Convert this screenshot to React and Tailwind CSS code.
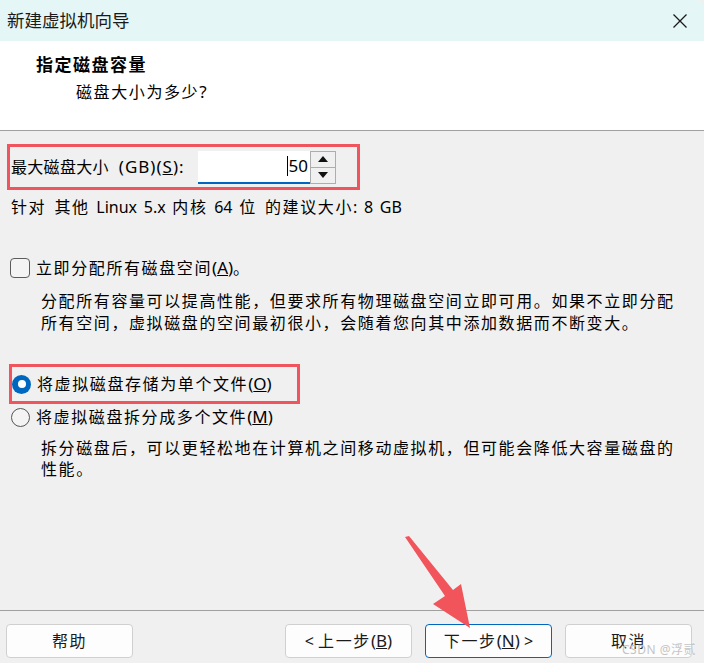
import React from "react";

const FONT = { fontFamily: '"Noto Sans", "Noto Sans CJK SC", sans-serif' };

function Cj({ children }) {
  return <span className="tracking-[1.6px]">{children}</span>;
}

function Radio({ checked }) {
  if (checked) {
    return (
      <span className="w-[19px] h-[19px] rounded-full bg-[#0067c0] flex items-center justify-center shrink-0">
        <span className="w-[8px] h-[8px] rounded-full bg-white" />
      </span>
    );
  }
  return <span className="w-[19px] h-[19px] rounded-full border border-[#555] bg-[#f4f4f4] shrink-0" />;
}

function Btn({ children, primary, w }) {
  return (
    <div
      className={
        "h-[34px] rounded-[4px] flex items-center justify-center text-[16px] text-[#1b1b1b] bg-[#fdfdfd] " +
        (primary ? "border border-[#0067c0] " : "border border-[#d0d0d0] ") +
        w
      }
    >
      <span className="whitespace-pre">{children}</span>
    </div>
  );
}

export default function App() {
  return (
    <div className="w-[704px] h-[663px] bg-[#f0f0f0] relative overflow-hidden flex flex-col text-black" style={FONT}>
      {/* title bar */}
      <div className="h-[41px] bg-[#e4f7f6] flex items-center justify-between shrink-0 rounded-tr-[8px]">
        <span className="ml-[7px] text-[17.5px] text-[#1a1a1a]">新建虚拟机向导</span>
        <svg width="16" height="16" viewBox="0 0 16 16" className="mr-[16px]">
          <path d="M1.5 1.5 L14.5 14.5 M14.5 1.5 L1.5 14.5" stroke="#1a1a1a" strokeWidth="1.3" fill="none" />
        </svg>
      </div>

      {/* header */}
      <div className="h-[90px] bg-white border-b border-[#a0a0a0] shrink-0 pt-[12px]">
        <div className="ml-[36px] text-[17px] font-bold leading-[24px] tracking-[1.5px]">指定磁盘容量</div>
        <div className="mt-[3px] ml-[76px] text-[16px] leading-[24px]">
          <Cj>磁盘大小为多少</Cj><span className="text-[17px]">?</span>
        </div>
      </div>

      {/* body */}
      <div className="flex-1 flex flex-col">
        <div className="mt-[13px] ml-[7px] w-[353px] h-[46px] border-[3px] border-[#f0545c] flex items-center">
          <div className="w-[188px] pl-[1px] text-[16px] whitespace-nowrap">
            <span className="tracking-[0.3px]">最大磁盘大小</span>
            <span className="text-[17px] ml-[10px] tracking-[1px]">(GB)(<span className="underline">S</span>):</span>
          </div>
          <div className="w-[112px] h-[33px] bg-white border-b-2 border-[#0067c0] flex items-center justify-end pr-[2px] text-[17px]">
            <span className="w-px h-[20px] bg-black mr-[1px]" />
            50
          </div>
          <div className="w-[26px] h-[33px] border border-[#adadad] flex flex-col bg-[#f0f0f0]">
            <div className="flex-1 border-b border-[#adadad] flex items-center justify-center">
              <svg width="10" height="6" viewBox="0 0 10 6"><path d="M5 0 L10 6 L0 6 Z" fill="#111" /></svg>
            </div>
            <div className="flex-1 flex items-center justify-center">
              <svg width="10" height="6" viewBox="0 0 10 6"><path d="M0 0 L10 0 L5 6 Z" fill="#111" /></svg>
            </div>
          </div>
        </div>

        <div className="mt-[6px] ml-[11px] h-[22px] leading-[22px] text-[16px] whitespace-nowrap [word-spacing:2.5px]">
          <Cj>针对 其他</Cj> Linux 5.x <Cj>内核</Cj> 64 <Cj>位 的建议大小</Cj>: 8 GB
        </div>

        <div className="mt-[39px] ml-[10px] h-[22px] flex items-center">
          <span className="w-[20px] h-[20px] rounded-[4px] border border-[#5c5c5c] bg-[#f4f4f4] shrink-0" />
          <span className="ml-[6px] text-[16px] leading-[22px]">
            <Cj>立即分配所有磁盘空间</Cj><span className="text-[17px]">(<span className="underline">A</span>)</span><Cj>。</Cj>
          </span>
        </div>

        <div className="mt-[11px] ml-[41px] text-[16px] leading-[22px] tracking-[1.6px] whitespace-nowrap">
          <div>分配所有容量可以提高性能，但要求所有物理磁盘空间立即可用。如果不立即分配</div>
          <div>所有空间，虚拟磁盘的空间最初很小，会随着您向其中添加数据而不断变大。</div>
        </div>

        <div className="mt-[30px] ml-[9px] w-[291px] h-[40px] border-[3px] border-[#f0545c] flex items-center">
          <Radio checked />
          <span className="ml-[6px] text-[16px] leading-[22px]">
            <Cj>将虚拟磁盘存储为单个文件</Cj><span className="text-[17px]">(<span className="underline">O</span>)</span>
          </span>
        </div>

        <div className="mt-[2px] ml-[11px] h-[22px] flex items-center">
          <Radio />
          <span className="ml-[6px] text-[16px] leading-[22px]">
            <Cj>将虚拟磁盘拆分成多个文件</Cj><span className="text-[17px]">(<span className="underline">M</span>)</span>
          </span>
        </div>

        <div className="mt-[10px] ml-[41px] text-[16px] leading-[21px] tracking-[1.6px] whitespace-nowrap">
          <div>拆分磁盘后，可以更轻松地在计算机之间移动虚拟机，但可能会降低大容量磁盘的</div>
          <div>性能。</div>
        </div>
      </div>

      {/* footer */}
      <div className="h-[53px] border-t border-[#a0a0a0] shrink-0 pt-[13px] flex">
        <div className="ml-[6px]">
          <Btn w="w-[127px]"><Cj>帮助</Cj></Btn>
        </div>
        <div className="ml-auto flex gap-[13px] mr-[12px]">
          <Btn w="w-[127px]">{"< "}<Cj>上一步</Cj><span className="text-[17px]">(<span className="underline">B</span>)</span></Btn>
          <Btn w="w-[127px]" primary><Cj>下一步</Cj><span className="text-[17px]">(<span className="underline">N</span>)</span>{" >"}</Btn>
          <Btn w="w-[127px]"><Cj>取消</Cj></Btn>
        </div>
      </div>

      {/* annotation arrow */}
      <svg className="absolute left-0 top-0 pointer-events-none" width="704" height="663" viewBox="0 0 704 663">
        <polygon points="405,537 409,536 453,590 461,584 470,628 433,604 445,596" fill="#f2545b" />
      </svg>

      {/* watermark */}
      <div className="absolute right-[8px] bottom-[4px] text-[12px] text-[#c4c4c4] tracking-[0.5px]" style={{ textShadow: "0 0 2px #fff" }}>
        CSDN @浮贰
      </div>
    </div>
  );
}
